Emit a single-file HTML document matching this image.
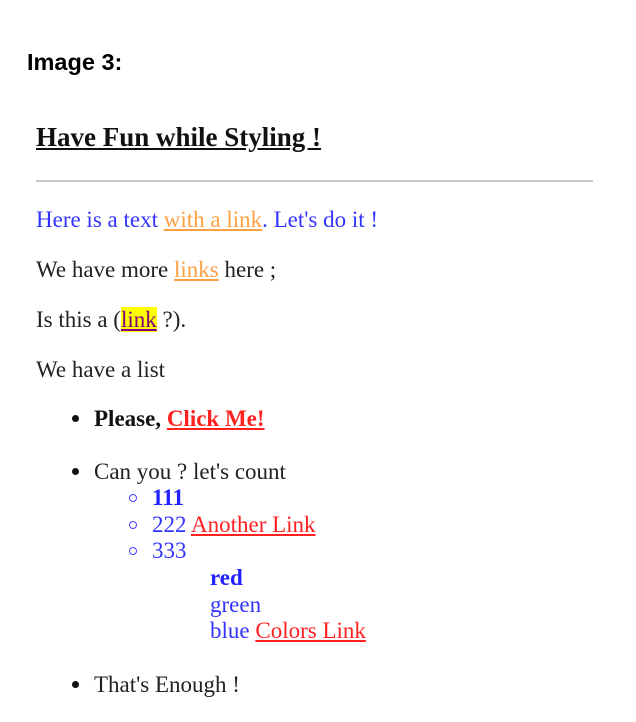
<!DOCTYPE html>
<html><head><style>
body{margin:0;width:636px;height:722px;background:#fff;position:relative;font-family:"Liberation Serif",serif;font-size:23px;color:#222;}
.l{position:absolute;line-height:26px;white-space:nowrap;}
a{text-decoration:underline;}
.o{color:#ffa040;}
.r{color:#ff2020;}
.b{color:#3333ff;}
.dot{position:absolute;width:7px;height:7px;border-radius:50%;background:#111;}
.circ{position:absolute;width:6px;height:6px;border-radius:50%;border:1.5px solid #4444ff;}
</style></head><body>
<div class="l" style="left:27px;top:49px;font-family:'Liberation Sans',sans-serif;font-weight:bold;font-size:23.5px;color:#000">Image 3:</div>
<div class="l" style="left:36px;top:124px;font-weight:bold;font-size:27px;text-decoration:underline;color:#111">Have Fun while Styling !</div>
<div style="position:absolute;left:36px;top:180px;width:557px;height:2px;background:#c8c8c8"></div>
<div class="l b" style="left:36px;top:207px">Here is a text <a class="o">with a link</a>. Let's do it !</div>
<div class="l" style="left:36px;top:257px">We have more <a class="o">links</a> here ;</div>
<div class="l" style="left:36px;top:307px">Is this a (<a style="background:#ffff00;color:#800080">link</a> ?).</div>
<div class="l" style="left:36px;top:357px">We have a list</div>
<div class="dot" style="left:72px;top:415px"></div>
<div class="l" style="left:94px;top:406px;font-weight:bold;color:#111">Please, <a class="r">Click Me!</a></div>
<div class="dot" style="left:72px;top:468px"></div>
<div class="l" style="left:94px;top:459px">Can you ? let's count</div>
<div class="circ" style="left:129px;top:494px"></div>
<div class="l b" style="left:152px;top:485px;font-weight:bold;color:#2222ff">111</div>
<div class="circ" style="left:129px;top:521px"></div>
<div class="l b" style="left:152px;top:512px">222 <a class="r">Another Link</a></div>
<div class="circ" style="left:129px;top:547px"></div>
<div class="l b" style="left:152px;top:538px">333</div>
<div class="l" style="left:210px;top:565px;font-weight:bold;color:#2222ff">red</div>
<div class="l b" style="left:210px;top:592px">green</div>
<div class="l b" style="left:210px;top:618px">blue <a class="r">Colors Link</a></div>
<div class="dot" style="left:72px;top:681px"></div>
<div class="l" style="left:94px;top:672px">That's Enough !</div>
</body></html>
